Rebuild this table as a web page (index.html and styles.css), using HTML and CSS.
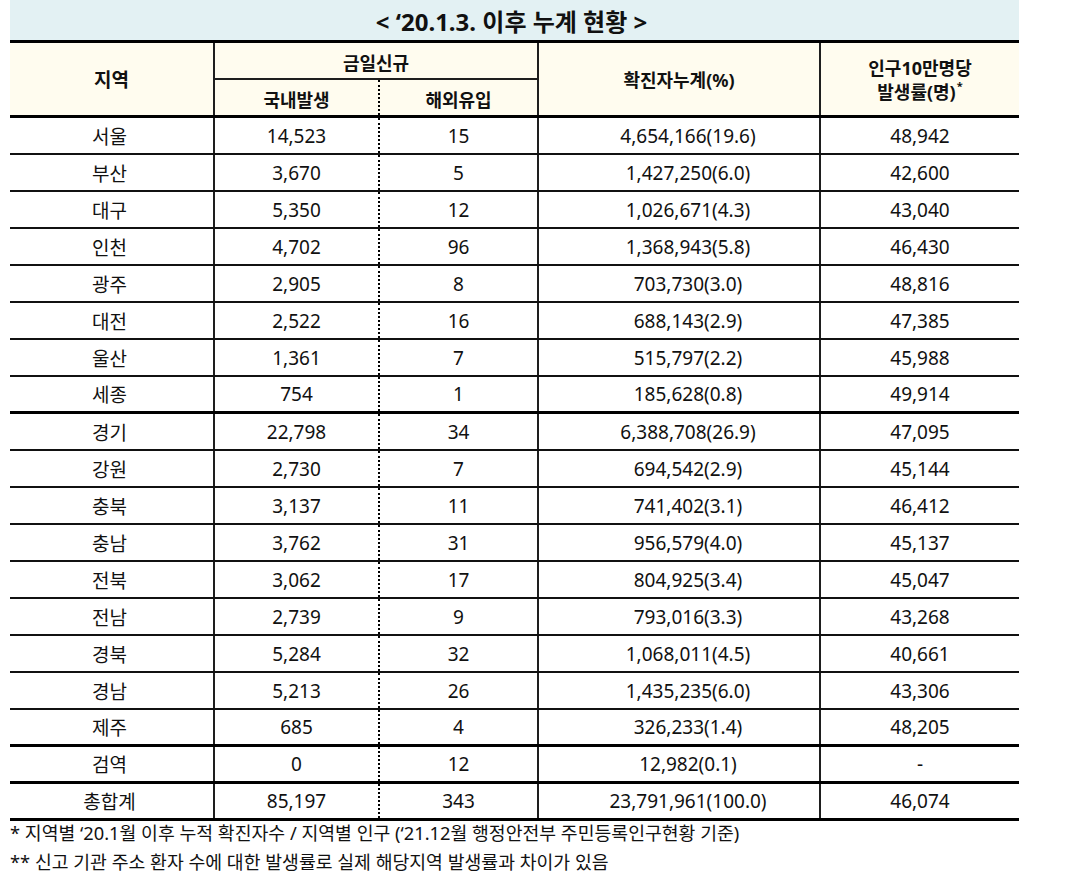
FILE: index.html
```html
<!DOCTYPE html>
<html lang="ko">
<head>
<meta charset="utf-8">
<title>누계 현황</title>
<link rel="stylesheet" href="styles.css">
</head>
<body>
<div class="page">
  <div class="title">&lt; ‘20.1.3. 이후 누계 현황 &gt;</div>
  <div class="head">
    <div class="hc c1 span2">지역</div>
    <div class="hc c2 top">금일신규</div>
    <div class="hc c4 span2">확진자누계(%)</div>
    <div class="hc c5 span2 two"><span>인구10만명당<br>발생률(명)<sup>*</sup></span></div>
    <div class="hc c2 sub">국내발생</div>
    <div class="hc c3 sub">해외유입</div>
  </div>
  <div class="body">
    <div class="row"><div class="c c1">서울</div><div class="c c2">14,523</div><div class="c c3">15</div><div class="c c4">4,654,166(19.6)</div><div class="c c5">48,942</div></div>
    <div class="row"><div class="c c1">부산</div><div class="c c2">3,670</div><div class="c c3">5</div><div class="c c4">1,427,250(6.0)</div><div class="c c5">42,600</div></div>
    <div class="row"><div class="c c1">대구</div><div class="c c2">5,350</div><div class="c c3">12</div><div class="c c4">1,026,671(4.3)</div><div class="c c5">43,040</div></div>
    <div class="row"><div class="c c1">인천</div><div class="c c2">4,702</div><div class="c c3">96</div><div class="c c4">1,368,943(5.8)</div><div class="c c5">46,430</div></div>
    <div class="row"><div class="c c1">광주</div><div class="c c2">2,905</div><div class="c c3">8</div><div class="c c4">703,730(3.0)</div><div class="c c5">48,816</div></div>
    <div class="row"><div class="c c1">대전</div><div class="c c2">2,522</div><div class="c c3">16</div><div class="c c4">688,143(2.9)</div><div class="c c5">47,385</div></div>
    <div class="row"><div class="c c1">울산</div><div class="c c2">1,361</div><div class="c c3">7</div><div class="c c4">515,797(2.2)</div><div class="c c5">45,988</div></div>
    <div class="row thick"><div class="c c1">세종</div><div class="c c2">754</div><div class="c c3">1</div><div class="c c4">185,628(0.8)</div><div class="c c5">49,914</div></div>
    <div class="row"><div class="c c1">경기</div><div class="c c2">22,798</div><div class="c c3">34</div><div class="c c4">6,388,708(26.9)</div><div class="c c5">47,095</div></div>
    <div class="row"><div class="c c1">강원</div><div class="c c2">2,730</div><div class="c c3">7</div><div class="c c4">694,542(2.9)</div><div class="c c5">45,144</div></div>
    <div class="row"><div class="c c1">충북</div><div class="c c2">3,137</div><div class="c c3">11</div><div class="c c4">741,402(3.1)</div><div class="c c5">46,412</div></div>
    <div class="row"><div class="c c1">충남</div><div class="c c2">3,762</div><div class="c c3">31</div><div class="c c4">956,579(4.0)</div><div class="c c5">45,137</div></div>
    <div class="row"><div class="c c1">전북</div><div class="c c2">3,062</div><div class="c c3">17</div><div class="c c4">804,925(3.4)</div><div class="c c5">45,047</div></div>
    <div class="row"><div class="c c1">전남</div><div class="c c2">2,739</div><div class="c c3">9</div><div class="c c4">793,016(3.3)</div><div class="c c5">43,268</div></div>
    <div class="row"><div class="c c1">경북</div><div class="c c2">5,284</div><div class="c c3">32</div><div class="c c4">1,068,011(4.5)</div><div class="c c5">40,661</div></div>
    <div class="row"><div class="c c1">경남</div><div class="c c2">5,213</div><div class="c c3">26</div><div class="c c4">1,435,235(6.0)</div><div class="c c5">43,306</div></div>
    <div class="row thick"><div class="c c1">제주</div><div class="c c2">685</div><div class="c c3">4</div><div class="c c4">326,233(1.4)</div><div class="c c5">48,205</div></div>
    <div class="row thick"><div class="c c1">검역</div><div class="c c2">0</div><div class="c c3">12</div><div class="c c4">12,982(0.1)</div><div class="c c5">-</div></div>
    <div class="row thick"><div class="c c1">총합계</div><div class="c c2">85,197</div><div class="c c3">343</div><div class="c c4">23,791,961(100.0)</div><div class="c c5">46,074</div></div>
  </div>
  <div class="notes">
    <div class="note">* 지역별 ‘20.1월 이후 누적 확진자수 / 지역별 인구 (‘21.12월 행정안전부 주민등록인구현황 기준)</div>
    <div class="note">** 신고 기관 주소 환자 수에 대한 발생률로 실제 해당지역 발생률과 차이가 있음</div>
  </div>
</div>
</body>
</html>
```

FILE: styles.css
```css
* { box-sizing: border-box; }

html, body {
  margin: 0;
  padding: 0;
  background: #ffffff;
}

body {
  font-family: "Noto Sans", "Noto Sans CJK KR", sans-serif;
  color: #111111;
}

.page {
  width: 1009px;
  margin-left: 10px;
}

.title {
  height: 40px;
  background: #e3f1f3;
  display: flex;
  align-items: center;
  justify-content: center;
  font-size: 24px;
  font-weight: 700;
  padding-top: 1px;
  padding-right: 6px;
}

.head {
  display: grid;
  grid-template-columns: 203px 165px 159px 282px 200px;
  grid-template-rows: 37px 35px;
  background: #fffcef;
  border-top: 3px solid #000;
  border-bottom: 3px solid #000;
}

.hc {
  display: flex;
  align-items: center;
  justify-content: center;
  font-size: 18px;
  font-weight: 700;
  text-align: center;
}

.hc.c1 { grid-column: 1; grid-row: 1 / span 2; font-size: 19px; }
.hc.top { grid-column: 2 / span 2; grid-row: 1; border-left: 2px solid #1e1e1e; border-bottom: 2px solid #1e1e1e; padding-top: 2px; }
.hc.c4 { grid-column: 4; grid-row: 1 / span 2; border-left: 2px solid #1e1e1e; }
.hc.c5 { grid-column: 5; grid-row: 1 / span 2; border-left: 2px solid #1e1e1e; line-height: 24px; padding-top: 2px; }
.hc.sub.c2 { grid-column: 2; grid-row: 2; border-left: 2px solid #1e1e1e; padding-top: 2px; }
.hc.sub.c3 { grid-column: 3; grid-row: 2; border-left: 2px dotted #000; padding-top: 2px; }

.hc sup {
  font-size: 11px;
  line-height: 0;
  vertical-align: 9px;
  margin-left: 1px;
}

.row {
  display: grid;
  grid-template-columns: 203px 165px 159px 282px 200px;
  height: 37px;
  border-bottom: 2px solid #111;
}

.row.thick {
  border-bottom: 3px solid #000;
}

.c {
  display: flex;
  align-items: center;
  justify-content: center;
  font-size: 19px;
  font-weight: 400;
  white-space: nowrap;
}

.c.c1 { padding-right: 4px; }
.c.c2 { border-left: 2px solid #1e1e1e; }
.c.c3 { border-left: 2px dotted #000; }
.c.c4 { border-left: 2px solid #1e1e1e; padding-left: 18px; }
.c.c5 { border-left: 2px solid #1e1e1e; }

.notes {
  display: flex;
  flex-direction: column;
  gap: 5px;
}

.note {
  font-size: 18.3px;
  line-height: 24px;
  white-space: nowrap;
}
```
